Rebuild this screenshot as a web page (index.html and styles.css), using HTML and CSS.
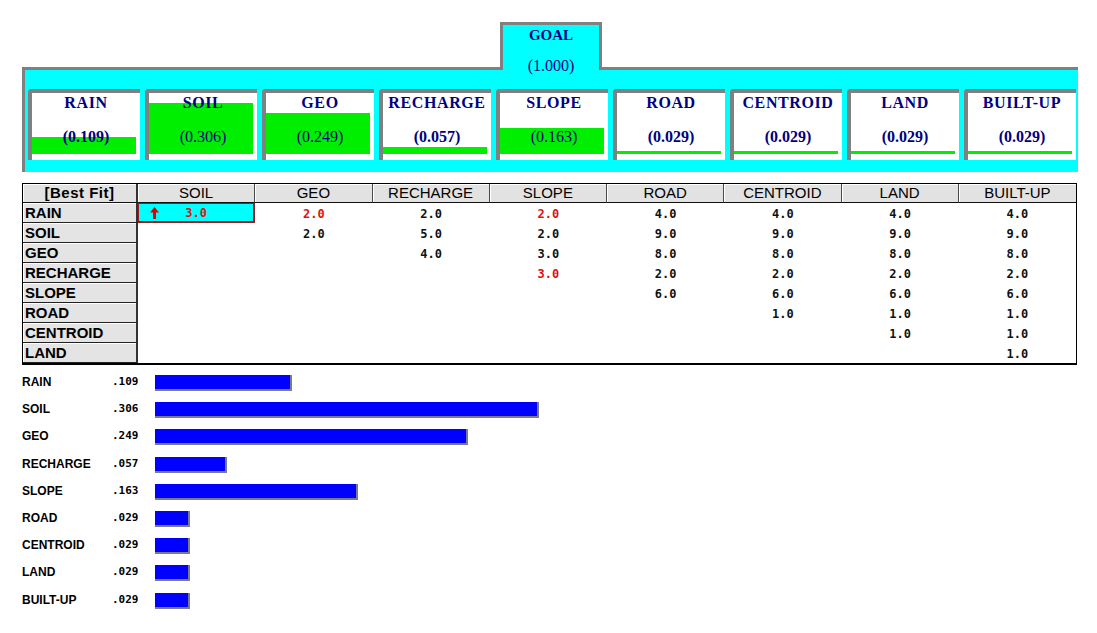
FILE: index.html
```html
<!DOCTYPE html>
<html>
<head>
<meta charset="utf-8">
<title>AHP Weights</title>
<link rel="stylesheet" href="styles.css">
</head>
<body>
<div class="page">
  <div class="goal-row">
    <div class="goal-tab">
      <div class="goal-name">GOAL</div>
      <div class="goal-val">(1.000)</div>
    </div>
  </div>
  <div class="panel">
    <div class="crit"><div class="fill-wrap"><div class="fill" style="height:17px"></div></div><div class="crit-text"><div class="cname">RAIN</div><div class="cval">(0.109)</div></div></div>
    <div class="crit"><div class="fill-wrap"><div class="fill" style="height:51px"></div></div><div class="crit-text"><div class="cname">SOIL</div><div class="cval reg">(0.306)</div></div></div>
    <div class="crit"><div class="fill-wrap"><div class="fill" style="height:41px"></div></div><div class="crit-text"><div class="cname">GEO</div><div class="cval reg">(0.249)</div></div></div>
    <div class="crit"><div class="fill-wrap"><div class="fill" style="height:7px"></div></div><div class="crit-text"><div class="cname">RECHARGE</div><div class="cval">(0.057)</div></div></div>
    <div class="crit"><div class="fill-wrap"><div class="fill" style="height:26px"></div></div><div class="crit-text"><div class="cname">SLOPE</div><div class="cval reg">(0.163)</div></div></div>
    <div class="crit"><div class="fill-wrap"><div class="fill" style="height:3px"></div></div><div class="crit-text"><div class="cname">ROAD</div><div class="cval">(0.029)</div></div></div>
    <div class="crit"><div class="fill-wrap"><div class="fill" style="height:3px"></div></div><div class="crit-text"><div class="cname">CENTROID</div><div class="cval">(0.029)</div></div></div>
    <div class="crit"><div class="fill-wrap"><div class="fill" style="height:3px"></div></div><div class="crit-text"><div class="cname">LAND</div><div class="cval">(0.029)</div></div></div>
    <div class="crit"><div class="fill-wrap"><div class="fill" style="height:3px"></div></div><div class="crit-text"><div class="cname">BUILT-UP</div><div class="cval">(0.029)</div></div></div>
  </div>

  <div class="matrix">
    <div class="hcell corner">[Best Fit]</div>
    <div class="hcell">SOIL</div>
    <div class="hcell">GEO</div>
    <div class="hcell">RECHARGE</div>
    <div class="hcell">SLOPE</div>
    <div class="hcell">ROAD</div>
    <div class="hcell">CENTROID</div>
    <div class="hcell">LAND</div>
    <div class="hcell last">BUILT-UP</div>

    <div class="rlabel">RAIN</div>
    <div class="dcell selected"><svg class="arrow" width="9" height="12" viewBox="0 0 9 12"><path d="M4.5 0 L9 5.5 L6 5.5 L6 12 L3 12 L3 5.5 L0 5.5 Z" fill="#e00000"/></svg><span class="sval red">3.0</span></div>
    <div class="dcell red">2.0</div>
    <div class="dcell">2.0</div>
    <div class="dcell red">2.0</div>
    <div class="dcell">4.0</div>
    <div class="dcell">4.0</div>
    <div class="dcell">4.0</div>
    <div class="dcell">4.0</div>

    <div class="rlabel">SOIL</div>
    <div class="dcell"></div>
    <div class="dcell">2.0</div>
    <div class="dcell">5.0</div>
    <div class="dcell">2.0</div>
    <div class="dcell">9.0</div>
    <div class="dcell">9.0</div>
    <div class="dcell">9.0</div>
    <div class="dcell">9.0</div>

    <div class="rlabel">GEO</div>
    <div class="dcell"></div>
    <div class="dcell"></div>
    <div class="dcell">4.0</div>
    <div class="dcell">3.0</div>
    <div class="dcell">8.0</div>
    <div class="dcell">8.0</div>
    <div class="dcell">8.0</div>
    <div class="dcell">8.0</div>

    <div class="rlabel">RECHARGE</div>
    <div class="dcell"></div>
    <div class="dcell"></div>
    <div class="dcell"></div>
    <div class="dcell red">3.0</div>
    <div class="dcell">2.0</div>
    <div class="dcell">2.0</div>
    <div class="dcell">2.0</div>
    <div class="dcell">2.0</div>

    <div class="rlabel">SLOPE</div>
    <div class="dcell"></div>
    <div class="dcell"></div>
    <div class="dcell"></div>
    <div class="dcell"></div>
    <div class="dcell">6.0</div>
    <div class="dcell">6.0</div>
    <div class="dcell">6.0</div>
    <div class="dcell">6.0</div>

    <div class="rlabel">ROAD</div>
    <div class="dcell"></div>
    <div class="dcell"></div>
    <div class="dcell"></div>
    <div class="dcell"></div>
    <div class="dcell"></div>
    <div class="dcell">1.0</div>
    <div class="dcell">1.0</div>
    <div class="dcell">1.0</div>

    <div class="rlabel">CENTROID</div>
    <div class="dcell"></div>
    <div class="dcell"></div>
    <div class="dcell"></div>
    <div class="dcell"></div>
    <div class="dcell"></div>
    <div class="dcell"></div>
    <div class="dcell">1.0</div>
    <div class="dcell">1.0</div>

    <div class="rlabel">LAND</div>
    <div class="dcell"></div>
    <div class="dcell"></div>
    <div class="dcell"></div>
    <div class="dcell"></div>
    <div class="dcell"></div>
    <div class="dcell"></div>
    <div class="dcell"></div>
    <div class="dcell">1.0</div>
  </div>

  <div class="bars">
    <div class="brow"><div class="bl">RAIN</div><div class="bv">.109</div><div class="bar" style="width:135px"></div></div>
    <div class="brow"><div class="bl">SOIL</div><div class="bv">.306</div><div class="bar" style="width:382px"></div></div>
    <div class="brow"><div class="bl">GEO</div><div class="bv">.249</div><div class="bar" style="width:311px"></div></div>
    <div class="brow"><div class="bl">RECHARGE</div><div class="bv">.057</div><div class="bar" style="width:70px"></div></div>
    <div class="brow"><div class="bl">SLOPE</div><div class="bv">.163</div><div class="bar" style="width:201px"></div></div>
    <div class="brow"><div class="bl">ROAD</div><div class="bv">.029</div><div class="bar" style="width:33px"></div></div>
    <div class="brow"><div class="bl">CENTROID</div><div class="bv">.029</div><div class="bar" style="width:33px"></div></div>
    <div class="brow"><div class="bl">LAND</div><div class="bv">.029</div><div class="bar" style="width:33px"></div></div>
    <div class="brow"><div class="bl">BUILT-UP</div><div class="bv">.029</div><div class="bar" style="width:33px"></div></div>
  </div>
</div>
</body>
</html>
```

FILE: styles.css
```css
html, body {
  margin: 0;
  padding: 0;
  background: #ffffff;
}

body {
  font-family: "Liberation Sans", Arial, sans-serif;
  color: #000;
}

.page {
  padding-top: 22px;
}

/* ---------- goal tab ---------- */
.goal-row {
  display: flex;
  padding-left: 500px;
}

.goal-tab {
  width: 96px;
  height: 45px;
  border: 3px solid #808080;
  border-bottom: 0;
  background: #00ffff;
  margin-bottom: -3px;
  position: relative;
  z-index: 1;
  text-align: center;
  color: #000080;
  font-family: "Liberation Serif", "Times New Roman", serif;
}

.goal-name {
  font-size: 15px;
  font-weight: bold;
  line-height: 18px;
  padding-top: 1px;
}

.goal-val {
  font-size: 16px;
  line-height: 18px;
  margin-top: 13px;
}

/* ---------- criteria panel ---------- */
.panel {
  box-sizing: border-box;
  width: 1056px;
  margin-left: 22px;
  border-top: 3px solid #808080;
  border-left: 3px solid #808080;
  background: #00ffff;
  padding: 19px 2px 12px 3px;
  display: flex;
  gap: 5px;
}

.crit {
  box-sizing: border-box;
  width: 112px;
  height: 71px;
  border-top: 4px solid #808080;
  border-left: 4px solid #808080;
  border-top-left-radius: 4px;
  background: #ffffff;
  display: grid;
  grid-template: 1fr / 1fr;
}

.crit > * {
  grid-area: 1 / 1;
}

.fill-wrap {
  display: flex;
  align-items: flex-end;
  padding: 0 4px 6px 0;
}

.fill {
  width: 100%;
  background: #00ee00;
}

.crit-text {
  text-align: center;
  color: #000080;
  font-family: "Liberation Serif", "Times New Roman", serif;
  font-size: 16px;
  line-height: 18px;
}

.cname {
  font-weight: bold;
  letter-spacing: 0.6px;
  padding-top: 1px;
}

.cval {
  font-weight: bold;
  margin-top: 16px;
}

.cval.reg {
  font-weight: normal;
}

/* ---------- matrix ---------- */
.matrix {
  box-sizing: border-box;
  width: 1055px;
  margin: 11px 0 0 22px;
  border: 1px solid #000;
  border-bottom: 2px solid #000;
  display: grid;
  grid-template-columns: 115px repeat(8, 1fr);
  grid-auto-rows: 20px;
  grid-template-rows: 19px;
}

.hcell {
  box-sizing: border-box;
  background: #e2e2e2;
  border-right: 1px solid #4a4a4a;
  border-bottom: 1px solid #111;
  box-shadow: inset 1px 1px 0 #ffffff;
  font-size: 15px;
  line-height: 18px;
  text-align: center;
  white-space: nowrap;
}

.hcell.corner {
  font-weight: bold;
  letter-spacing: 0.5px;
  border-right: 2px solid #333;
}

.hcell.last {
  border-right: 0;
}

.rlabel {
  box-sizing: border-box;
  background: #e4e4e4;
  border-right: 2px solid #333;
  border-bottom: 1px solid #222;
  box-shadow: inset 1px 1px 0 #ffffff;
  font-size: 15px;
  font-weight: bold;
  line-height: 19px;
  padding-left: 2px;
  white-space: nowrap;
}

.dcell {
  display: flex;
  align-items: center;
  justify-content: center;
  font-family: "DejaVu Sans Mono", "Liberation Mono", monospace;
  font-weight: bold;
  font-size: 12px;
  color: #111;
  padding-top: 1px;
}

.red {
  color: #e01010;
}

.dcell.selected {
  box-sizing: border-box;
  background: #00ffff;
  border: 2px solid #9a1c1c;
  border-top-width: 1px;
  border-left-width: 1px;
  padding-top: 0;
  display: grid;
  grid-template: 1fr / 1fr;
  align-items: center;
}

.dcell.selected > * {
  grid-area: 1 / 1;
}

.arrow {
  justify-self: start;
  margin-left: 11px;
}

.sval {
  justify-self: center;
}

/* ---------- bar chart ---------- */
.bars {
  padding: 10px 0 0 22px;
}

.brow {
  display: flex;
  align-items: flex-start;
  height: 27.2px;
}

.bl {
  width: 90px;
  font-size: 12px;
  font-weight: bold;
  line-height: 14px;
  white-space: nowrap;
}

.bv {
  width: 43px;
  font-family: "DejaVu Sans Mono", "Liberation Mono", monospace;
  font-size: 11px;
  font-weight: bold;
  line-height: 14px;
}

.bar {
  height: 14px;
  background: #0000ff;
  border-right: 2px solid #7a7a8a;
  border-bottom: 2px solid #7a7a8a;
}
```
